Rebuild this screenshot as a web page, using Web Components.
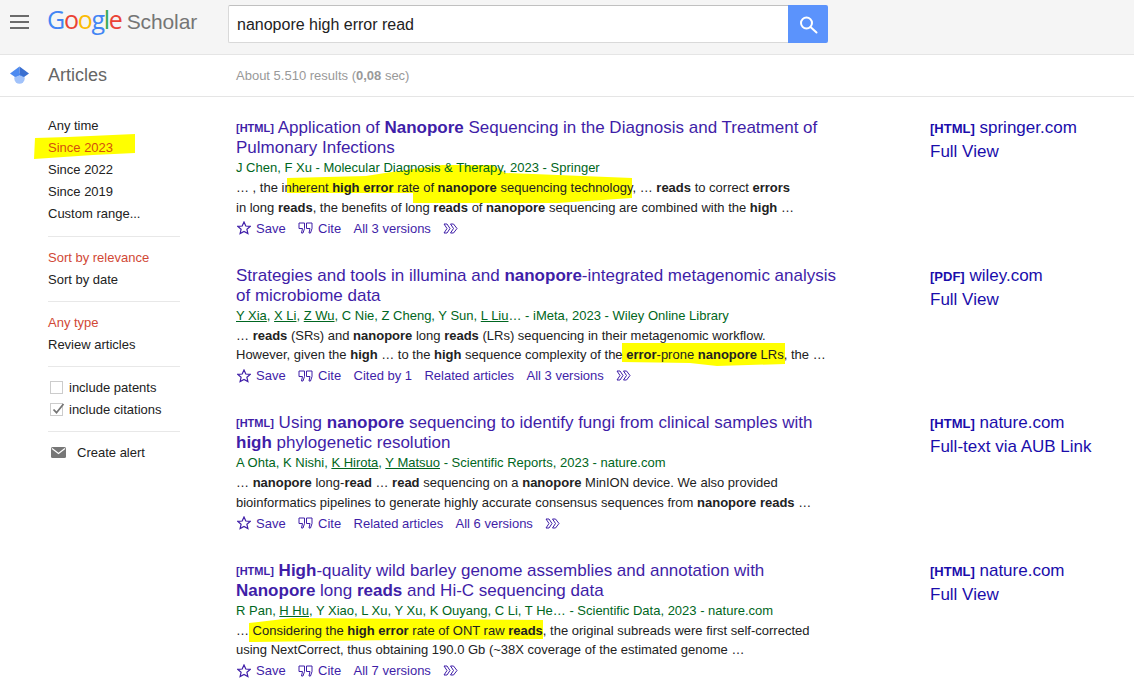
<!DOCTYPE html>
<html>
<head>
<meta charset="utf-8">
<title>Google Scholar</title>
<style>
  html, body { margin: 0; background: #fff; }
  body { font-family: "Liberation Sans", Arial, sans-serif; height: 700px; overflow: hidden; }
</style>
</head>
<body>
<gs-page>
  <gs-topbar query="nanopore high error read"></gs-topbar>
  <gs-subbar></gs-subbar>
  <gs-main>
    <gs-sidebar slot="side"></gs-sidebar>

    <gs-result slot="results" format="[HTML]" source="springer.com" link="Full View" versions="All 3 versions">
      <span slot="title">Application of <b>Nanopore</b> Sequencing in the Diagnosis and Treatment of Pulmonary Infections</span>
      <span slot="authors">J Chen, F Xu - Molecular Diagnosis &amp; Therapy, 2023 - Springer</span>
      <span slot="snippet">… , the inherent <b>high error</b> rate of <b>nanopore</b> sequencing technology, … <b>reads</b> to correct <b>errors</b><br>in long <b>reads</b>, the benefits of long <b>reads</b> of <b>nanopore</b> sequencing are combined with the <b>high</b> …</span>
      <svg slot="marks" viewBox="0 0 620 70" width="620" height="70"><polygon fill="#ffff00" points="51,9 130,7 149,4 206,-4 256,-4 269,4 396,9 396,29 322,34 177,34 177,24 51,24"/></svg>
    </gs-result>

    <gs-result slot="results" pdf source="wiley.com" link="Full View" cited="Cited by 1" related versions="All 3 versions">
      <span slot="title">Strategies and tools in illumina and <b>nanopore</b>-integrated metagenomic analysis of microbiome data</span>
      <span slot="authors"><u>Y Xia</u>, <u>X Li</u>, <u>Z Wu</u>, C Nie, Z Cheng, Y Sun, <u>L Liu</u>… - iMeta, 2023 - Wiley Online Library</span>
      <span slot="snippet">… <b>reads</b> (SRs) and <b>nanopore</b> long <b>reads</b> (LRs) sequencing in their metagenomic workflow.<br>However, given the <b>high</b> … to the <b>high</b> sequence complexity of the <b>error</b>-prone <b>nanopore</b> LRs, the …</span>
      <svg slot="marks" viewBox="0 0 620 70" width="620" height="70"><polygon fill="#ffff00" points="386,26 549,26 549,47 481,49 454,46 386,45"/></svg>
    </gs-result>

    <gs-result slot="results" format="[HTML]" source="nature.com" link="Full-text via AUB Link" related versions="All 6 versions">
      <span slot="title">Using <b>nanopore</b> sequencing to identify fungi from clinical samples with <b>high</b> phylogenetic resolution</span>
      <span slot="authors">A Ohta, K Nishi, <u>K Hirota</u>, <u>Y Matsuo</u> - Scientific Reports, 2023 - nature.com</span>
      <span slot="snippet">… <b>nanopore</b> long-<b>read</b> … <b>read</b> sequencing on a <b>nanopore</b> MinION device. We also provided<br>bioinformatics pipelines to generate highly accurate consensus sequences from <b>nanopore reads</b> …</span>
    </gs-result>

    <gs-result slot="results" format="[HTML]" source="nature.com" link="Full View" versions="All 7 versions">
      <span slot="title"><b>High</b>-quality wild barley genome assemblies and annotation with <b>Nanopore</b> long <b>reads</b> and Hi-C sequencing data</span>
      <span slot="authors">R Pan, <u>H Hu</u>, Y Xiao, L Xu, Y Xu, K Ouyang, C Li, T He… - Scientific Data, 2023 - nature.com</span>
      <span slot="snippet">… Considering the <b>high error</b> rate of ONT raw <b>reads</b>, the original subreads were first self-corrected<br>using NextCorrect, thus obtaining 190.0 Gb (~38X coverage of the estimated genome …</span>
      <svg slot="marks" viewBox="0 0 620 70" width="620" height="70"><polygon fill="#ffff00" points="13,11 56,6 307,8 307,27 156,28 13,30"/></svg>
    </gs-result>
  </gs-main>
</gs-page>

<script>
class GsPage extends HTMLElement {
  constructor() {
    super();
    this.attachShadow({ mode: 'open' });
    this.shadowRoot.innerHTML = `
      <style>
        :host { display: block; font-family: "Liberation Sans", Arial, sans-serif; }
      </style>
      <slot></slot>
    `;
  }
}
customElements.define('gs-page', GsPage);

class GsTopbar extends HTMLElement {
  constructor() {
    super();
    this.attachShadow({ mode: 'open' });
    const q = this.getAttribute('query') || '';
    this.shadowRoot.innerHTML = `
      <style>
        :host {
          display: flex;
          align-items: flex-start;
          box-sizing: border-box;
          height: 55px;
          background: #f5f5f5;
          border-bottom: 1px solid #e5e5e5;
        }
        .menu { width: 19px; margin: 15px 0 0 10px; display: flex; flex-direction: column; gap: 4px; }
        .menu i { display: block; height: 2px; background: #6b6b6b; }
        .logo {
          margin: 4px 0 0 18px;
          width: 181px;
          font-family: "Open Sans", "Liberation Sans", sans-serif;
          font-size: 25px;
          font-weight: 500;
          line-height: 30px;
          letter-spacing: -1.3px;
          white-space: nowrap;
        }
        .logo .s { color: #757575; font-family: "Liberation Sans", sans-serif; font-weight: 400; font-size: 21px; letter-spacing: -0.1px; }
        .search { display: flex; margin: 5px 0 0 0; height: 38px; }
        .input {
          box-sizing: border-box;
          width: 560px;
          height: 38px;
          background: #fff;
          border: 1px solid #d9d9d9;
          border-top-color: #c0c0c0;
          border-right: 0;
          border-radius: 2px 0 0 2px;
          padding: 0 8px;
          font-size: 16px;
          line-height: 37px;
          color: #222;
        }
        .btn {
          width: 40px;
          height: 38px;
          background: #5b93fc;
          border-radius: 0 2px 2px 0;
          display: flex;
          align-items: center;
          justify-content: center;
        }
      </style>
      <div class="menu"><i></i><i></i><i></i></div>
      <div class="logo"><span style="color:#4285f4">G</span><span style="color:#ea4335">o</span><span style="color:#fbbc05">o</span><span style="color:#4285f4">g</span><span style="color:#34a853">l</span><span style="color:#ea4335">e</span> <span class="s">Scholar</span></div>
      <div class="search">
        <div class="input">${q}</div>
        <div class="btn">
          <svg width="20" height="20" viewBox="0 0 20 20" fill="none" stroke="#fff" stroke-width="2"><circle cx="8.5" cy="9" r="5.5"/><path d="M12.5 13l6 5.5" stroke-linecap="round"/></svg>
        </div>
      </div>
    `;
  }
}
customElements.define('gs-topbar', GsTopbar);

class GsSubbar extends HTMLElement {
  constructor() {
    super();
    this.attachShadow({ mode: 'open' });
    this.shadowRoot.innerHTML = `
      <style>
        :host {
          display: flex;
          align-items: center;
          box-sizing: border-box;
          height: 42px;
          background: #fff;
          border-bottom: 1px solid #e5e5e5;
        }
        svg { margin-left: 10px; flex: none; }
        .name { width: 188px; margin-left: 19px; font-size: 18px; color: #666; }
        .stats { font-size: 13px; color: #999; }
      </style>
      <svg width="19" height="19" viewBox="0 0 19 19">
        <circle cx="9.5" cy="12.5" r="5.2" fill="#a1c2fa"/>
        <path d="M0 7.5 L9.5 0.5 L9.5 9 L5 11z" fill="#4d8af0"/>
        <path d="M19 7.5 L9.5 0.5 L9.5 9 L14 11z" fill="#3a6fd0"/>
        <path d="M5 11 L9.5 9 L14 11 L9.5 8z" fill="#4285f4"/>
      </svg>
      <div class="name">Articles</div>
      <div class="stats">About 5.510 results (<b>0,08</b> sec)</div>
    `;
  }
}
customElements.define('gs-subbar', GsSubbar);

class GsMain extends HTMLElement {
  constructor() {
    super();
    this.attachShadow({ mode: 'open' });
    this.shadowRoot.innerHTML = `
      <style>
        :host { display: flex; align-items: flex-start; }
        .side { width: 132px; margin: 17px 0 0 48px; flex: none; }
        .results { margin: 21px 0 0 56px; flex: 1; min-width: 0; display: flex; flex-direction: column; gap: 18px; }
      </style>
      <div class="side"><slot name="side"></slot></div>
      <div class="results"><slot name="results"></slot></div>
    `;
  }
}
customElements.define('gs-main', GsMain);

class GsSidebar extends HTMLElement {
  constructor() {
    super();
    this.attachShadow({ mode: 'open' });
    this.shadowRoot.innerHTML = `
      <style>
        :host { display: block; position: relative; isolation: isolate; font-size: 13px; color: #222; }
        .item { line-height: 24px; height: 22px; white-space: nowrap; position: relative; }
        .red { color: #d14836; }
        .g1 .red { color: #d4500c; }
        hr { border: 0; border-top: 1px solid #e8e8e8; margin: 0; }
        .g1 { padding-bottom: 12px; }
        .g { padding: 9px 0 11px; }
        .check { display: flex; align-items: center; height: 22px; gap: 6px; padding-left: 2px; }
        .check i { display: block; box-sizing: border-box; width: 13px; height: 13px; border: 1px solid #ccc; position: relative; }
        .check svg { position: absolute; left: 0; top: -3px; }
        .alert { display: flex; align-items: center; gap: 11px; height: 22px; padding: 9px 0 0 3px; }
        .mark { position: absolute; left: -15px; top: 20px; z-index: -1; }
      </style>
      <svg class="mark" width="102" height="25" viewBox="0 0 102 25"><polygon fill="#ffff00" points="2,4 35,3 102,0 102,19 60,21 1,25"/></svg>
      <div class="g1">
        <div class="item">Any time</div>
        <div class="item red">Since 2023</div>
        <div class="item">Since 2022</div>
        <div class="item">Since 2019</div>
        <div class="item">Custom range...</div>
      </div>
      <hr>
      <div class="g">
        <div class="item red">Sort by relevance</div>
        <div class="item">Sort by date</div>
      </div>
      <hr>
      <div class="g">
        <div class="item red">Any type</div>
        <div class="item">Review articles</div>
      </div>
      <hr>
      <div class="g">
        <div class="check"><i></i>include patents</div>
        <div class="check"><i><svg width="16" height="16" viewBox="0 0 16 16"><path d="M2.5 8.5l3 3.2L12.5 3" fill="none" stroke="#757575" stroke-width="1.8"/></svg></i>include citations</div>
      </div>
      <hr>
      <div class="alert">
        <svg width="15" height="11" viewBox="0 0 15 11"><rect width="15" height="11" rx="1.5" fill="#777"/><path d="M1 1.5l6.5 5 6.5-5" fill="none" stroke="#fff" stroke-width="1.2"/></svg>
        <span>Create alert</span>
      </div>
    `;
  }
}
customElements.define('gs-sidebar', GsSidebar);

class GsResult extends HTMLElement {
  constructor() {
    super();
    this.attachShadow({ mode: 'open' });
    const fmt = this.getAttribute('format');
    const cited = this.getAttribute('cited');
    const related = this.hasAttribute('related');
    const versions = this.getAttribute('versions');
    const pdf = this.hasAttribute('pdf');
    this.shadowRoot.innerHTML = `
      <style>
        :host { display: flex; align-items: flex-start; height: 129.67px; color: #222; }
        .body { width: 636px; flex: none; position: relative; isolation: isolate; }
        .title { font-size: 17px; line-height: 20px; color: #3f1ea8; width: 606px; }
        .tag { font-size: 11px; line-height: 1; color: #3f1ea8; font-weight: bold; position: relative; top: -1px; }
        .authors { font-size: 13px; line-height: 20px; height: 20px; color: #006621; white-space: nowrap; }
        .snippet { font-size: 13px; line-height: 19.5px; white-space: nowrap; position: relative; }
        .marks { position: absolute; left: 0; top: -9px; z-index: -1; display: block; line-height: 0; }
        .actions { display: flex; align-items: center; height: 22px; font-size: 13px; color: #3f1ea8; white-space: nowrap; padding-left: 1px; }
        .actions svg { flex: none; }
        .actions .a { margin-right: 12.4px; display: inline-flex; align-items: center; gap: 5px; }
        .side { margin-left: 58px; font-size: 17px; line-height: 24px; color: #1a0dab; white-space: nowrap; margin-top: -2px; }
        .side b { font-size: 13px; line-height: 1; }
        ::slotted(svg) { overflow: visible; display: block; }
      </style>
      <div class="body">
        <div class="title">${fmt ? `<span class="tag">${fmt}</span> ` : ''}<slot name="title"></slot></div>
        <div class="authors"><slot name="authors"></slot></div>
        <div class="snippet"><div class="marks"><slot name="marks"></slot></div><slot name="snippet"></slot></div>
        <div class="actions">
          <span class="a">
            <svg width="14" height="14" viewBox="0 0 14 14"><path d="M7 1l1.8 4 4.4.4-3.3 2.9 1 4.3L7 10.4l-3.9 2.2 1-4.3L.8 5.4 5.2 5z" fill="none" stroke="#3f1ea8" stroke-width="1.2"/></svg>
            Save</span>
          <span class="a">
            <svg width="15" height="12" viewBox="0 0 15 12"><path d="M1 1h5.5v5.5L5 11H3.5l1-4.5H1zM8.5 1H14v5.5L12.5 11H11l1-4.5H8.5z" fill="none" stroke="#3f1ea8" stroke-width="1"/></svg>
            Cite</span>
          ${cited ? `<span class="a">${cited}</span>` : ''}
          ${related ? `<span class="a">Related articles</span>` : ''}
          <span class="a">${versions}</span>
          <svg width="15" height="11" viewBox="0 0 15 11"><path d="M1 1h3l3 4.5L4 10H1l3-4.5zM7.5 1h3l3.5 4.5L10.5 10h-3l3-4.5z" fill="none" stroke="#3f1ea8" stroke-width="1"/></svg>
        </div>
      </div>
      <div class="side"><div>${pdf ? '<b>[PDF]</b>' : `<b>${fmt}</b>`} ${this.getAttribute('source')}</div><div>${this.getAttribute('link')}</div></div>
    `;
  }
}
customElements.define('gs-result', GsResult);
</script>
</body>
</html>
